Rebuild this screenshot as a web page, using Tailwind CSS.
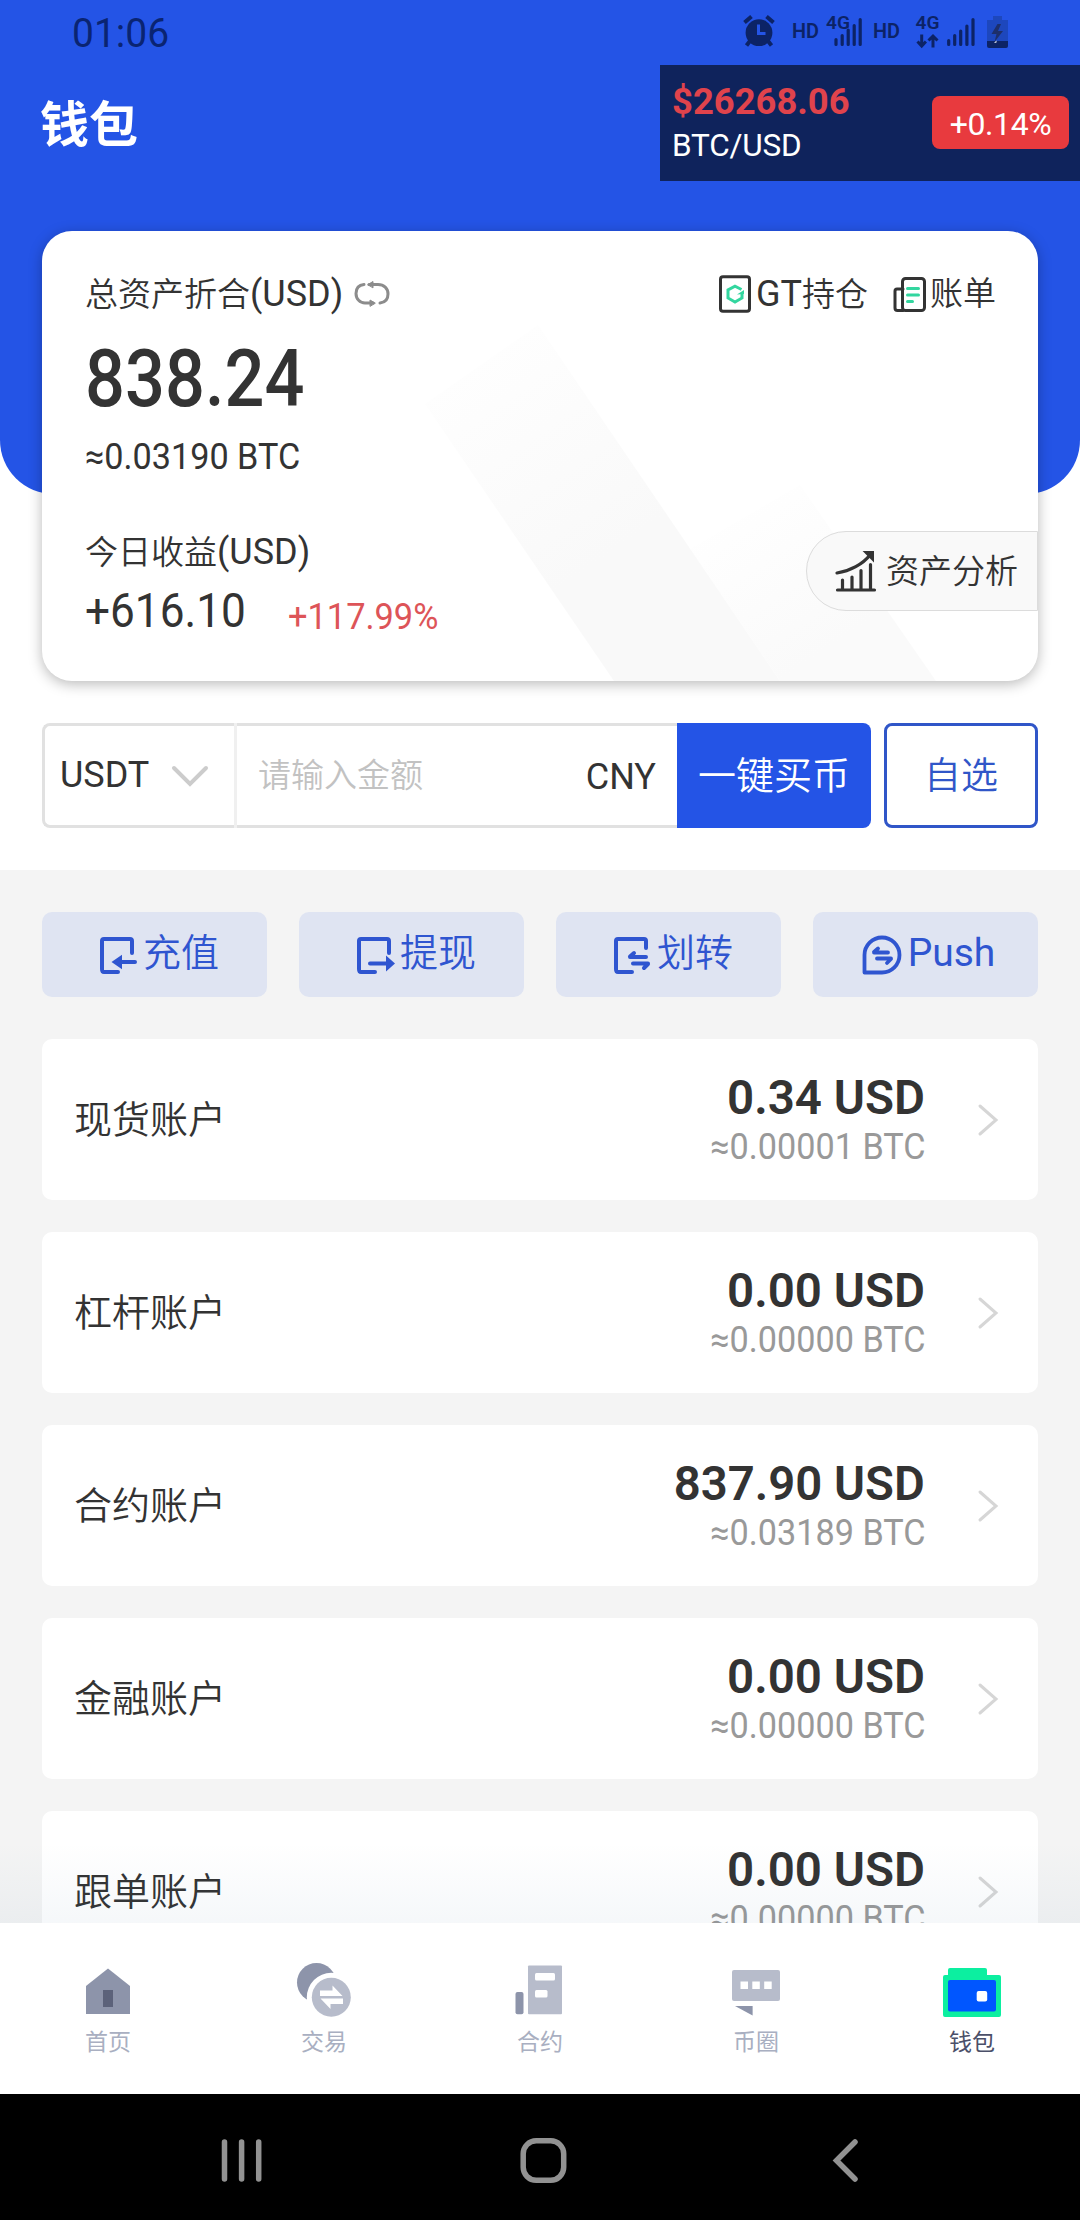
<!DOCTYPE html>
<html lang="zh-CN">
<head>
<meta charset="utf-8">
<title>钱包</title>
<script src="https://cdn.jsdelivr.net/npm/@tailwindcss/browser@4"></script>
</head>
<body class="w-[1080px] h-[2220px] overflow-hidden bg-white font-['Roboto','Noto_Sans_CJK_SC',sans-serif] text-[#333]">
<div class="relative flex h-[2220px] w-[1080px] flex-col overflow-hidden">

  <!-- Header -->
  <header class="h-[494px] shrink-0 rounded-b-[54px] bg-[#2454e6]">
    <div class="flex h-[65px] justify-between pl-[72px] pr-[65px] text-[#0a2472]">
      <span class="origin-left scale-x-[0.975] text-[40px] leading-[68px]">01:06</span>
      <svg class="h-[65px] w-[280px]" viewBox="735 0 280 65" fill="#0c2366">
        <circle cx="759" cy="32.7" r="13.4"/>
        <path d="M744.5 22.5l7-6M773.5 22.5l-7-6M750 41l-3.5 4.5M768 41l3.5 4.5" stroke="#0c2366" stroke-width="4" fill="none"/>
        <path d="M758.5 24.500v9h7" stroke="#2454e6" stroke-width="3" fill="none"/>
        <text x="792" y="37.900" font-size="19.500" font-weight="600" textLength="27" lengthAdjust="spacingAndGlyphs">HD</text>
        <text x="826" y="28.700" font-size="18.500" font-weight="600" textLength="24" lengthAdjust="spacingAndGlyphs">4G</text>
        <path d="M836 39.500v5M842.200 35.500v9M848.200 30v14.500M854.200 25.500v19M860.200 19.500v25" stroke="#0c2366" stroke-width="3.200" stroke-linecap="round"/>
        <text x="873" y="37.900" font-size="19.500" font-weight="600" textLength="27" lengthAdjust="spacingAndGlyphs">HD</text>
        <text x="915.500" y="28.700" font-size="18.500" font-weight="600" textLength="24" lengthAdjust="spacingAndGlyphs">4G</text>
        <path d="M921.700 34.500v11M917.500 41.500l4.200 4.500 4.200-4.500M933 47.500v-11M928.500 40.500l4.500-4.500 4.500 4.500" stroke="#0c2366" stroke-width="3" fill="none"/>
        <path d="M948.700 40.500v4M954.700 35.500v9M960.700 31v13.500M966.900 26v18.500M973 19.500v25" stroke="#0c2366" stroke-width="3.200" stroke-linecap="round"/>
        <path d="M993 16h9v4h-9zM987 20h21v21h-21z" fill="#1d47bd"/>
        <path d="M987 41h21v5q0 2-2 2h-17q-2 0-2-2z"/>
        <path d="M997.500 24l-6 10h5l-2 8 8.500-11h-5l3-7z" fill="#1d2f6b"/>
        <path d="M994 43l2.500-2.500v2z" fill="#fff"/>
      </svg>
    </div>
    <h1 class="mt-[25px] pl-[40px] text-[49px] font-bold leading-[72px] text-white">钱包</h1>
  </header>

  <!-- Floating price ticker -->
  <div class="absolute right-0 top-[65px] flex h-[116px] w-[420px] items-start justify-between bg-[#0f235c] pl-3 pr-[11px]">
    <div class="flex flex-col">
      <span class="mt-[16px] h-[42px] text-[36.4px] font-bold leading-[42px] text-[#e0434c]">$26268.06</span>
      <span class="mt-[3px] h-[40px] text-[31.5px] leading-[40px] tracking-[-0.2px] text-white">BTC/USD</span>
    </div>
    <span class="mt-[31px] h-[53px] w-[137px] rounded-lg bg-[#e83a3e] text-center text-[32px] leading-[56px] tracking-[-0.4px] text-white">+0.14%</span>
  </div>

  <!-- Balance card -->
  <section class="relative mx-[42px] -mt-[263px] flex h-[450px] shrink-0 flex-col rounded-[30px] bg-white pl-[43px] shadow-[0_3px_14px_rgba(0,0,0,0.28)]">
    <svg class="absolute inset-0 h-[450px] w-[996px] rounded-[30px]" viewBox="42 231 996 450">
      <defs>
        <linearGradient id="band" gradientUnits="userSpaceOnUse" x1="440" y1="330" x2="600" y2="560"><stop offset="0" stop-color="#f9f9f9" stop-opacity="0"/><stop offset="1" stop-color="#f9f9f9"/></linearGradient>
        <linearGradient id="band2" gradientUnits="userSpaceOnUse" x1="740" y1="490" x2="840" y2="640"><stop offset="0" stop-color="#fafafa" stop-opacity="0"/><stop offset="1" stop-color="#fafafa"/></linearGradient>
      </defs>
      <path d="M425 404L538 325 780 681H614z" fill="url(#band)"/>
      <path d="M690 549L800 485 936 681H780z" fill="url(#band2)"/>
    </svg>
    <div class="relative mt-[39px] flex h-[48px] items-center pr-[42px] text-[33px] leading-[48px]">
      <span class="font-[350]">总资产折合<span class="text-[36px] font-normal">(USD)</span></span>
      <svg class="ml-[11px] h-[28px] w-[36px]" viewBox="0 0 36 28" fill="none" stroke="#8c8c8c" stroke-width="3" stroke-linecap="round">
        <path d="M10 4.500C5 5 2 8 2 13.500S6 23 11 23h8M15 4.500h9c6 0 10 4 10 9.500s-3 8.500-8 9"/>
        <path d="M14 4.500l5-3v6zM21 23l-5-3v6z" fill="#8c8c8c" stroke-width="1"/>
      </svg>
      <div class="ml-auto flex items-center">
        <svg class="h-[38px] w-[32px]" viewBox="0 0 32 38" fill="none">
          <rect x="1.500" y="1.800" width="29" height="34.500" rx="2.500" stroke="#333" stroke-width="3"/>
          <path d="M22.500 14.500L16 11.200 9 15v8l7 4 7-4v-4" stroke="#33d69f" stroke-width="3"/><path d="M18 19.500l7-4.500v4z" fill="#33d69f"/>
        </svg>
        <span class="ml-[5px] font-[350]"><span class="text-[36px] font-normal">GT</span>持仓</span>
        <svg class="ml-[25px] h-[35px] w-[33px]" viewBox="0 0 33 35" fill="none" stroke-width="3" stroke-linecap="round">
          <path d="M10 12H4q-2 0-2 2v17q0 2.500 2.500 2.500H10" stroke="#333"/>
          <rect x="9.500" y="1.500" width="22" height="32" rx="3" stroke="#333"/>
          <path d="M14.500 11.500h11M14.500 18h11M14.500 24.500h5" stroke="#33d69f"/>
        </svg>
        <span class="ml-[4px] font-[350]">账单</span>
      </div>
    </div>
    <div class="relative mt-[16px] h-[90px] w-[260px] origin-left scale-x-[0.89] text-[79px] font-medium leading-[90px]">838.24</div>
    <div class="relative mt-[11px] h-[44px] w-[300px] origin-left scale-x-[0.95] text-[36px] leading-[44px]">≈0.03190 BTC</div>
    <div class="relative mt-[49px] h-[48px] text-[33px] font-[350] leading-[48px]">今日收益<span class="text-[36px] font-normal">(USD)</span></div>
    <div class="relative mt-[10px] flex h-[50px] leading-[50px]">
      <span class="w-[203px] origin-left scale-x-[0.92] text-[48px]">+616.10</span>
      <span class="mt-[6px] origin-left scale-x-[0.955] text-[36px] text-[#dd5458]">+117.99%</span>
    </div>
    <div class="absolute right-0 top-[300px] flex h-[80px] w-[232px] items-center rounded-l-full border border-[#dcdcdc] bg-[#f9f9f9] pl-[28px] text-[33px] font-[350]">
      <svg class="h-[42px] w-[42px]" viewBox="0 0 42 42" fill="none" stroke="#333" stroke-width="3.200" stroke-linecap="round">
        <path d="M2.500 40h37M7.500 39V30M17 39V27M26 39V20.500M35.500 39V14.500"/>
        <path d="M2 23C15 21 28 14 35 5"/><path d="M30 2h8v8z" fill="#333" stroke-width="2"/>
      </svg>
      <span class="ml-[9px] mt-[2px]">资产分析</span>
    </div>
  </section>

  <!-- Quick buy -->
  <section class="mt-[42px] flex h-[105px] shrink-0 px-[42px]">
    <div class="flex w-[192px] items-center rounded-l-lg border-[3px] border-r-0 border-[#e1e1e1] pl-[15px] text-[36px]">
      <span class="-mt-[2px] leading-[40px]">USDT</span>
      <svg class="ml-[22px] h-[24px] w-[38px]" viewBox="0 0 38 24" fill="none" stroke="#ccc" stroke-width="4" stroke-linecap="round"><path d="M3 4l16 16L35 4"/></svg>
    </div>
    <div class="w-[3px] bg-[#f0f0f0]"></div>
    <div class="flex w-[440px] items-center justify-between border-y-[3px] border-[#e1e1e1] pl-[21px] pr-[21px]">
      <span class="text-[33px] font-[350] text-[#c2c2c2]">请输入金额</span>
      <span class="mt-[2px] text-[36px]">CNY</span>
    </div>
    <div class="flex w-[194px] items-center justify-center rounded-r-lg bg-[#2454e6] pt-[2px] text-[38px] font-[350] text-white">一键买币</div>
    <div class="ml-[13px] flex w-[154px] items-center justify-center rounded-lg border-[3px] border-[#3056c8] pt-[2px] text-[37px] font-[350] text-[#3056c8]">自选</div>
  </section>

  <!-- Accounts -->
  <main class="mt-[42px] flex h-[1053px] shrink-0 flex-col overflow-hidden bg-[#f4f4f4] px-[42px] pt-[42px]">
    <div class="grid h-[85px] shrink-0 grid-cols-4 gap-8 text-[38px] font-[350] text-[#2f55d0]">
      <div class="flex items-center justify-center gap-[5px] rounded-[10px] bg-[#dfe4f2] pl-[9px]">
        <svg class="h-[38px] w-[39px]" viewBox="0 0 39 38" fill="none" stroke="#2f55d0" stroke-width="4" stroke-linecap="round"><path d="M33 17V5q0-2-2-2H5Q3 3 3 5v28q0 3 2 3h14M18 26h18"/><path d="M21 22.500v7L16 26z" fill="#2f55d0"/></svg>
        <span class="-mt-[2px]">充值</span>
      </div>
      <div class="flex items-center justify-center gap-[5px] rounded-[10px] bg-[#dfe4f2] pl-[9px]">
        <svg class="h-[38px] w-[39px]" viewBox="0 0 39 38" fill="none" stroke="#2f55d0" stroke-width="4" stroke-linecap="round"><path d="M33 17V5q0-2-2-2H5Q3 3 3 5v28q0 3 2 3h14M14 27.500h20"/><path d="M32 24v7l4-3.500z" fill="#2f55d0"/></svg>
        <span class="-mt-[2px]">提现</span>
      </div>
      <div class="flex items-center justify-center gap-[5px] rounded-[10px] bg-[#dfe4f2] pl-[9px]">
        <svg class="h-[38px] w-[39px]" viewBox="0 0 39 38" fill="none" stroke="#2f55d0" stroke-width="4" stroke-linecap="round"><path d="M33 12V5q0-2-2-2H5Q3 3 3 5v28q0 3 2 3h14M17 21h16M20 27.500h15M17 20.500l4-3.500M35 28l-4 4"/></svg>
        <span class="-mt-[2px]">划转</span>
      </div>
      <div class="flex items-center justify-center gap-[6px] rounded-[10px] bg-[#dfe4f2] pl-[6px] font-normal">
        <svg class="h-[40px] w-[40px]" viewBox="0 0 40 40" fill="none" stroke="#2f55d0" stroke-width="3.800" stroke-linecap="round" stroke-linejoin="round"><path d="M2.500 37.500V20A17.500 17.500 0 1 1 20 37.500z"/><path d="M12 17.500h14M12 17l4-3.500M15 23.500h14M29 24l-4 4"/></svg>
        <span class="-mt-[3px] text-[39px]">Push</span>
      </div>
    </div>

    <div class="mt-[42px] flex shrink-0 flex-col gap-8">
      <div class="flex h-[161px] items-center rounded-[10px] bg-white pl-[32px] pr-[39px]">
        <span class="mt-[1px] text-[38px] font-[350]">现货账户</span>
        <div class="ml-auto flex flex-col items-end pt-[4px]">
          <span class="h-[50px] origin-right scale-x-[0.99] text-[48px] font-semibold leading-[50px]">0.34 USD</span>
          <span class="h-[48px] origin-right scale-x-[0.95] text-[36px] leading-[48px] text-[#999]">≈0.00001 BTC</span>
        </div>
        <svg class="ml-[52px] h-[34px] w-[22px]" viewBox="0 0 22 34" fill="none" stroke="#d6d6d6" stroke-width="3" stroke-linecap="round"><path d="M3 3l16 14L3 31"/></svg>
      </div>
      <div class="flex h-[161px] items-center rounded-[10px] bg-white pl-[32px] pr-[39px]">
        <span class="mt-[1px] text-[38px] font-[350]">杠杆账户</span>
        <div class="ml-auto flex flex-col items-end pt-[4px]">
          <span class="h-[50px] origin-right scale-x-[0.99] text-[48px] font-semibold leading-[50px]">0.00 USD</span>
          <span class="h-[48px] origin-right scale-x-[0.95] text-[36px] leading-[48px] text-[#999]">≈0.00000 BTC</span>
        </div>
        <svg class="ml-[52px] h-[34px] w-[22px]" viewBox="0 0 22 34" fill="none" stroke="#d6d6d6" stroke-width="3" stroke-linecap="round"><path d="M3 3l16 14L3 31"/></svg>
      </div>
      <div class="flex h-[161px] items-center rounded-[10px] bg-white pl-[32px] pr-[39px]">
        <span class="mt-[1px] text-[38px] font-[350]">合约账户</span>
        <div class="ml-auto flex flex-col items-end pt-[4px]">
          <span class="h-[50px] origin-right scale-x-[0.985] text-[48px] font-semibold leading-[50px]">837.90 USD</span>
          <span class="h-[48px] origin-right scale-x-[0.95] text-[36px] leading-[48px] text-[#999]">≈0.03189 BTC</span>
        </div>
        <svg class="ml-[52px] h-[34px] w-[22px]" viewBox="0 0 22 34" fill="none" stroke="#d6d6d6" stroke-width="3" stroke-linecap="round"><path d="M3 3l16 14L3 31"/></svg>
      </div>
      <div class="flex h-[161px] items-center rounded-[10px] bg-white pl-[32px] pr-[39px]">
        <span class="mt-[1px] text-[38px] font-[350]">金融账户</span>
        <div class="ml-auto flex flex-col items-end pt-[4px]">
          <span class="h-[50px] origin-right scale-x-[0.99] text-[48px] font-semibold leading-[50px]">0.00 USD</span>
          <span class="h-[48px] origin-right scale-x-[0.95] text-[36px] leading-[48px] text-[#999]">≈0.00000 BTC</span>
        </div>
        <svg class="ml-[52px] h-[34px] w-[22px]" viewBox="0 0 22 34" fill="none" stroke="#d6d6d6" stroke-width="3" stroke-linecap="round"><path d="M3 3l16 14L3 31"/></svg>
      </div>
      <div class="flex h-[161px] items-center rounded-[10px] bg-white pl-[32px] pr-[39px]">
        <span class="mt-[1px] text-[38px] font-[350]">跟单账户</span>
        <div class="ml-auto flex flex-col items-end pt-[4px]">
          <span class="h-[50px] origin-right scale-x-[0.99] text-[48px] font-semibold leading-[50px]">0.00 USD</span>
          <span class="h-[48px] origin-right scale-x-[0.95] text-[36px] leading-[48px] text-[#999]">≈0.00000 BTC</span>
        </div>
        <svg class="ml-[52px] h-[34px] w-[22px]" viewBox="0 0 22 34" fill="none" stroke="#d6d6d6" stroke-width="3" stroke-linecap="round"><path d="M3 3l16 14L3 31"/></svg>
      </div>
    </div>
  </main>

  <!-- Tab bar with a soft shade cast above it -->
  <nav class="relative grid h-[171px] shrink-0 grid-cols-5 bg-white text-[23px] text-[#a9afc1]">
    <div class="absolute inset-x-0 -top-[80px] h-[80px] bg-linear-to-t from-[#3c6e96]/5 to-transparent"></div>
    <div class="flex flex-col items-center pt-[36px]">
      <svg class="h-[60px] w-[60px]" viewBox="78 1959 60 60"><path d="M108 1968.500l22 17.500v28H86v-28z" fill="#8d94aa"/><path d="M103 1990h10v17h-10z" fill="#5c627a"/></svg>
      <span class="mt-[8px] leading-[32px]">首页</span>
    </div>
    <div class="flex flex-col items-center pt-[36px]">
      <svg class="h-[60px] w-[60px]" viewBox="294 1959 60 60"><circle cx="316.500" cy="1982.500" r="19.500" fill="#8d94aa"/><circle cx="331.300" cy="1997.300" r="24.500" fill="#fff"/><circle cx="331.300" cy="1997.300" r="19.500" fill="#b7bccb"/><path d="M320 1990.500h12.500v-5l10 10.500H320zM343 2004h-12.500v5l-10-10.500H343z" fill="#fff"/></svg>
      <span class="mt-[8px] leading-[32px]">交易</span>
    </div>
    <div class="flex flex-col items-center pt-[36px]">
      <svg class="h-[60px] w-[60px]" viewBox="510 1959 60 60"><rect x="515.500" y="1992" width="8" height="22.300" rx="2" fill="#8d94aa"/><rect x="528" y="1965.500" width="34" height="48.800" rx="1" fill="#b7bccb"/><rect x="535" y="1973" width="20" height="7.500" rx="1.500" fill="#fff"/><rect x="535" y="1990" width="12.500" height="7.500" rx="1.500" fill="#fff"/></svg>
      <span class="mt-[8px] leading-[32px]">合约</span>
    </div>
    <div class="flex flex-col items-center pt-[36px]">
      <svg class="h-[60px] w-[60px]" viewBox="726 1959 60 60"><rect x="732" y="1970" width="48" height="31" rx="2" fill="#b7bccb"/><path d="M740.500 1981.500h7.500v7.500h-7.500zM752.300 1981.500h7.500v7.500h-7.500zM764.200 1981.500h7.500v7.500h-7.500z" fill="#fff"/><path d="M735 2006h17.600v9.500z" fill="#8d94aa"/></svg>
      <span class="mt-[8px] leading-[32px]">币圈</span>
    </div>
    <div class="flex flex-col items-center pt-[36px] text-[#4b5069]">
      <svg class="h-[60px] w-[60px]" viewBox="942 1959 60 60"><path d="M943 1977q0-2 2-2h3v-5q0-2 2-2h35q2 0 2 2v5h12q2 0 2 2v38q0 2-2 2h-54q-2 0-2-2z" fill="#0cefa0"/><rect x="948" y="1980" width="48" height="31.500" rx="2" fill="#0056ff"/><rect x="976.700" y="1991" width="10.500" height="10.500" rx="2" fill="#fff"/></svg>
      <span class="mt-[8px] leading-[32px]">钱包</span>
    </div>
  </nav>

  <!-- System navigation -->
  <footer class="h-[126px] shrink-0 bg-black">
    <svg class="h-[126px] w-[1080px]" viewBox="0 2094 1080 126" fill="none" stroke="#929292" stroke-width="5.500" stroke-linecap="round">
      <path d="M224.500 2142v37M241.600 2142v37M258.700 2142v37"/>
      <rect x="523.200" y="2140.800" width="40.500" height="39.500" rx="13"/>
      <path d="M855 2142l-18.500 18.500L855 2179"/>
    </svg>
  </footer>
</div>
</body>
</html>
